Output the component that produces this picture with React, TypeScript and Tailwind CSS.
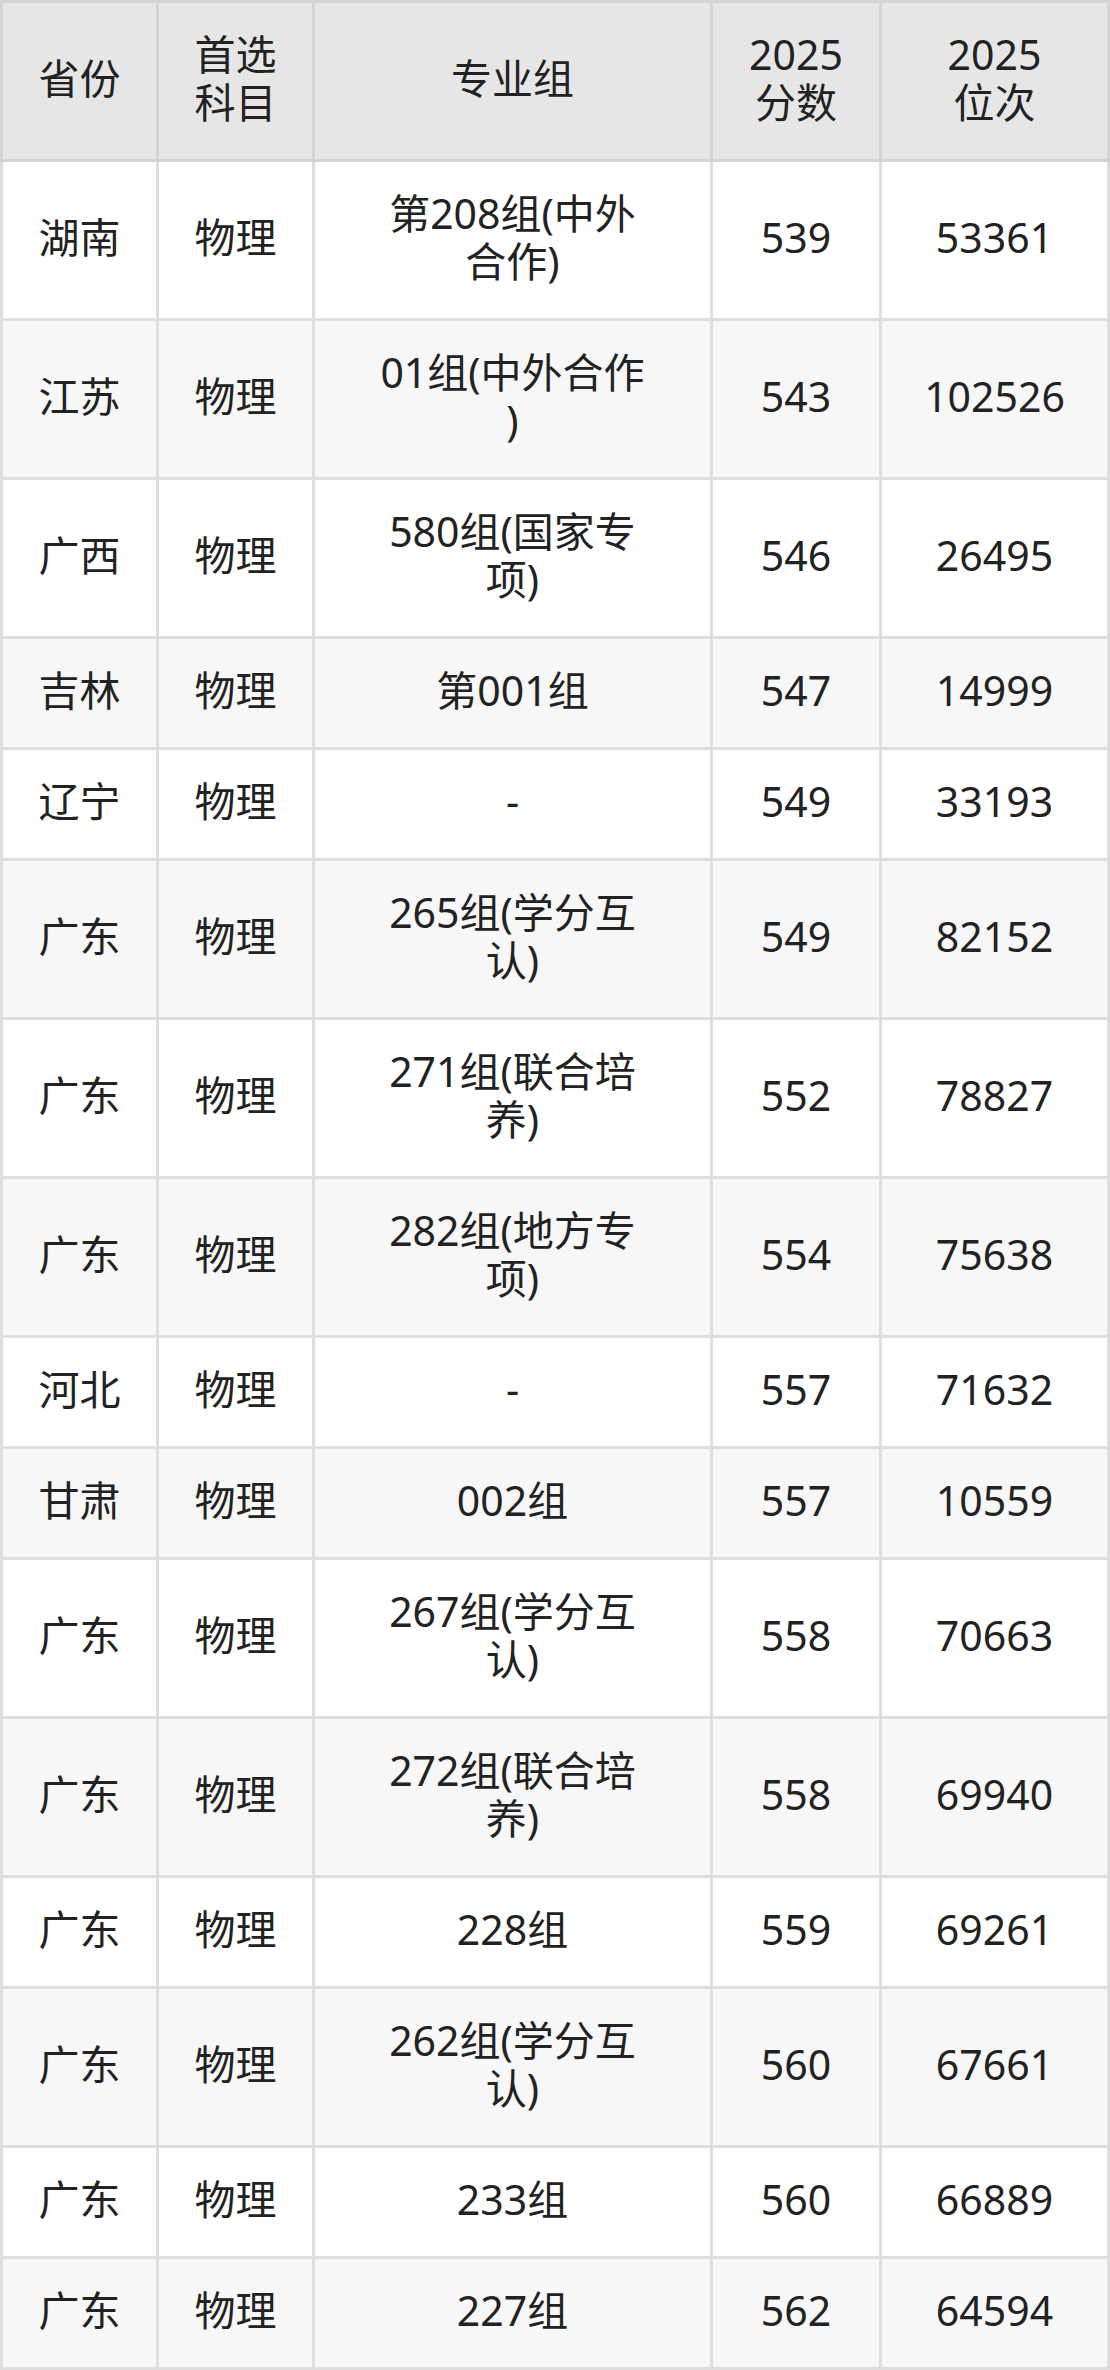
import React from "react";

type Row = {
  province: string;
  subject: string;
  group: string;
  score: string;
  rank: string;
};

const rows: Row[] = [
  { province: "湖南", subject: "物理", group: "第208组(中外合作)", score: "539", rank: "53361" },
  { province: "江苏", subject: "物理", group: "01组(中外合作)", score: "543", rank: "102526" },
  { province: "广西", subject: "物理", group: "580组(国家专项)", score: "546", rank: "26495" },
  { province: "吉林", subject: "物理", group: "第001组", score: "547", rank: "14999" },
  { province: "辽宁", subject: "物理", group: "-", score: "549", rank: "33193" },
  { province: "广东", subject: "物理", group: "265组(学分互认)", score: "549", rank: "82152" },
  { province: "广东", subject: "物理", group: "271组(联合培养)", score: "552", rank: "78827" },
  { province: "广东", subject: "物理", group: "282组(地方专项)", score: "554", rank: "75638" },
  { province: "河北", subject: "物理", group: "-", score: "557", rank: "71632" },
  { province: "甘肃", subject: "物理", group: "002组", score: "557", rank: "10559" },
  { province: "广东", subject: "物理", group: "267组(学分互认)", score: "558", rank: "70663" },
  { province: "广东", subject: "物理", group: "272组(联合培养)", score: "558", rank: "69940" },
  { province: "广东", subject: "物理", group: "228组", score: "559", rank: "69261" },
  { province: "广东", subject: "物理", group: "262组(学分互认)", score: "560", rank: "67661" },
  { province: "广东", subject: "物理", group: "233组", score: "560", rank: "66889" },
  { province: "广东", subject: "物理", group: "227组", score: "562", rank: "64594" },
];

const cols = "grid grid-cols-[153px_153px_395px_166px_225px] gap-x-[3px]";
const cell = "flex items-center justify-center text-center pt-[27px] pb-[33px] px-[6px]";

export default function App() {
  return (
    <div
      className="w-[1110px] text-[41px] leading-[48px] text-[#222222]"
      style={{ fontFamily: '"Noto Sans", "Noto Sans CJK SC", sans-serif' }}
    >
      {/* Header */}
      <div className={`${cols} bg-[#d4d4d4] p-[3px]`}>
        <div className={`${cell} bg-[#e6e6e6]`}>省份</div>
        <div className={`${cell} bg-[#e6e6e6]`}>
          首选
          <br />
          科目
        </div>
        <div className={`${cell} bg-[#e6e6e6]`}>专业组</div>
        <div className={`${cell} bg-[#e6e6e6]`}>
          2025
          <br />
          分数
        </div>
        <div className={`${cell} bg-[#e6e6e6]`}>
          2025
          <br />
          位次
        </div>
      </div>

      {/* Body */}
      <div className="flex flex-col gap-y-[3px] bg-[#dedede] px-[3px] pb-[3px]">
        {rows.map((r, i) => {
          const bg = i % 2 === 0 ? "bg-white" : "bg-[#f7f7f7]";
          return (
            <div key={i} className={cols}>
              <div className={`${cell} ${bg}`}>{r.province}</div>
              <div className={`${cell} ${bg}`}>{r.subject}</div>
              <div
                className={`flex items-center justify-center text-center pt-[27px] pb-[33px] px-[62px] [line-break:anywhere] ${bg}`}
              >
                {r.group}
              </div>
              <div className={`${cell} ${bg}`}>{r.score}</div>
              <div className={`${cell} ${bg}`}>{r.rank}</div>
            </div>
          );
        })}
      </div>
    </div>
  );
}
